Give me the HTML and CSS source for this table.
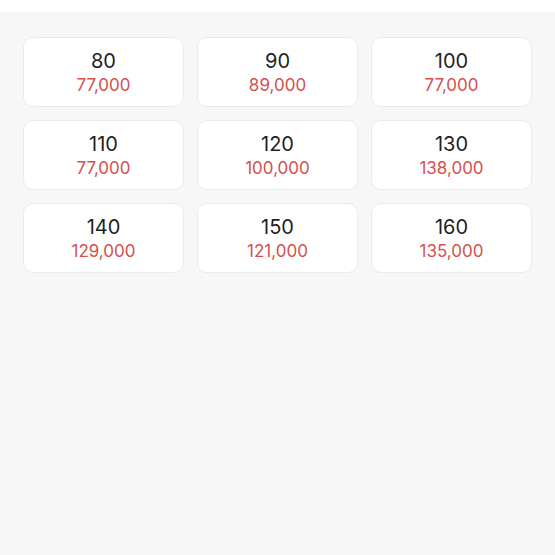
FILE: index.html
```html
<!DOCTYPE html>
<html>
<head>
<meta charset="utf-8">
<link rel="stylesheet" href="styles.css">
</head>
<body>
<div class="topbar"></div>
<div class="grid">
  <div class="card"><div class="size">80</div><div class="price">77,000</div></div>
  <div class="card"><div class="size">90</div><div class="price">89,000</div></div>
  <div class="card"><div class="size">100</div><div class="price">77,000</div></div>
  <div class="card"><div class="size">110</div><div class="price">77,000</div></div>
  <div class="card"><div class="size">120</div><div class="price">100,000</div></div>
  <div class="card"><div class="size">130</div><div class="price">138,000</div></div>
  <div class="card"><div class="size">140</div><div class="price">129,000</div></div>
  <div class="card"><div class="size">150</div><div class="price">121,000</div></div>
  <div class="card"><div class="size">160</div><div class="price">135,000</div></div>
</div>
</body>
</html>
```
FILE: styles.css
```css
html, body {
  margin: 0;
  padding: 0;
  background: #f7f7f7;
  height: 100%;
  font-family: Inter, "Liberation Sans", sans-serif;
}
.topbar {
  height: 12px;
  background: #ffffff;
}
.grid {
  display: grid;
  grid-template-columns: repeat(3, 161px);
  grid-auto-rows: 70px;
  column-gap: 13px;
  row-gap: 13px;
  padding: 25px 0 0 23px;
}
.card {
  background: #ffffff;
  border: 1px solid #ebebeb;
  border-radius: 10px;
  box-sizing: border-box;
  display: flex;
  flex-direction: column;
  align-items: center;
  justify-content: center;
  padding-top: 2px;
}
.size {
  font-size: 20px;
  line-height: 24px;
  color: #1f1f1f;
}
.price {
  font-size: 17px;
  line-height: 24px;
  color: #d6504c;
}
```
